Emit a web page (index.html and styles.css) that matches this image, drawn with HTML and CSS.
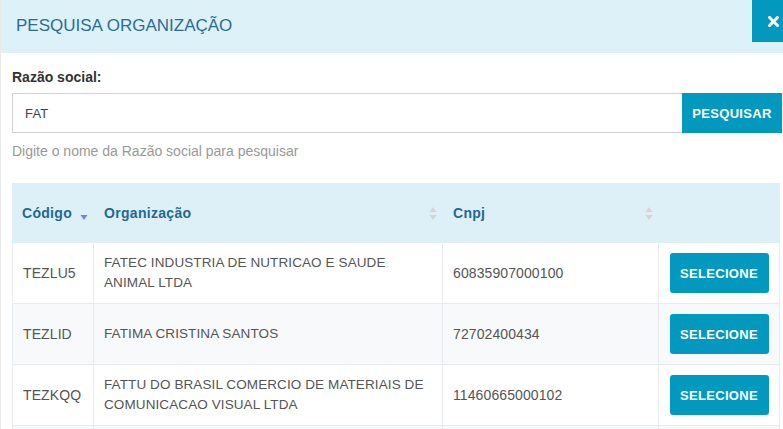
FILE: index.html
```html
<!DOCTYPE html>
<html lang="pt-BR">
<head>
<meta charset="utf-8">
<title>Pesquisa Organização</title>
<link rel="stylesheet" href="styles.css">
</head>
<body>
<div class="modal">
  <div class="modal-header">
    <h1 class="modal-title">PESQUISA ORGANIZAÇÃO</h1>
    <button class="close-btn" aria-label="Fechar">
      <svg width="11" height="11" viewBox="0 0 11 11"><path d="M1.5 1.5 L9.5 9.5 M9.5 1.5 L1.5 9.5" stroke="#fff" stroke-width="3" stroke-linecap="square"/></svg>
    </button>
  </div>
  <div class="modal-body">
    <label class="field-label">Razão social:</label>
    <div class="search-row">
      <div class="search-input">FAT</div>
      <button class="search-btn">PESQUISAR</button>
    </div>
    <p class="help">Digite o nome da Razão social para pesquisar</p>
    <table class="grid">
      <colgroup>
        <col class="c1"><col class="c2"><col class="c3"><col class="c4">
      </colgroup>
      <thead>
        <tr>
          <th><div class="th-in"><span>Código</span>
            <svg class="sort" width="8" height="15" viewBox="0 0 8 15"><path d="M0.5 9 L7.5 9 L4 14 Z" fill="#7b7fe2"/></svg></div></th>
          <th><div class="th-in"><span>Organização</span>
            <svg class="sort" width="8" height="15" viewBox="0 0 8 15"><path d="M4 1 L7.5 6 L0.5 6 Z" fill="#d8d2d2"/><path d="M0.5 9 L7.5 9 L4 14 Z" fill="#d8d2d2"/></svg></div></th>
          <th><div class="th-in"><span>Cnpj</span>
            <svg class="sort" width="8" height="15" viewBox="0 0 8 15"><path d="M4 1 L7.5 6 L0.5 6 Z" fill="#d8d2d2"/><path d="M0.5 9 L7.5 9 L4 14 Z" fill="#d8d2d2"/></svg></div></th>
          <th></th>
        </tr>
      </thead>
      <tbody>
        <tr>
          <td class="code">TEZLU5</td>
          <td class="org">FATEC INDUSTRIA DE NUTRICAO E SAUDE ANIMAL LTDA</td>
          <td class="num">60835907000100</td>
          <td class="act"><button class="sel-btn">SELECIONE</button></td>
        </tr>
        <tr class="alt">
          <td class="code">TEZLID</td>
          <td class="org">FATIMA CRISTINA SANTOS</td>
          <td class="num">72702400434</td>
          <td class="act"><button class="sel-btn">SELECIONE</button></td>
        </tr>
        <tr>
          <td class="code">TEZKQQ</td>
          <td class="org">FATTU DO BRASIL COMERCIO DE MATERIAIS DE COMUNICACAO VISUAL LTDA</td>
          <td class="num">11460665000102</td>
          <td class="act"><button class="sel-btn">SELECIONE</button></td>
        </tr>
        <tr class="alt">
          <td></td><td></td><td></td><td class="act"></td>
        </tr>
      </tbody>
    </table>
  </div>
</div>
</body>
</html>
```
FILE: styles.css
```css
html, body {
  margin: 0;
  padding: 0;
  background: #fff;
  overflow: hidden;
}
body {
  font-family: "Liberation Sans", Arial, sans-serif;
  color: #555;
}
.modal {
  width: 793px;
  border-left: 1px solid #e9e9e9;
  background: #fff;
}
.modal-header {
  height: 53px;
  background: #ddf1f8;
  display: flex;
  justify-content: space-between;
  align-items: flex-start;
}
.modal-title {
  margin: 0;
  padding: 16px 0 0 15px;
  font-size: 17px;
  font-weight: normal;
  line-height: 20px;
  color: #2a6c96;
}
.close-btn {
  width: 42px;
  height: 42px;
  border: 0;
  padding: 0;
  background: #0399bf;
  display: flex;
  align-items: center;
  justify-content: center;
}
.modal-body {
  padding: 14px 12px 0 11px;
}
.field-label {
  display: block;
  font-weight: bold;
  font-size: 14px;
  line-height: 20px;
  color: #333;
  margin-bottom: 6px;
}
.search-row {
  display: flex;
  height: 40px;
}
.search-input {
  flex: 1;
  border: 1px solid #d2d2d2;
  border-right: 0;
  padding: 0 12px;
  font-size: 13px;
  letter-spacing: 0.2px;
  color: #444;
  display: flex;
  align-items: center;
}
.search-btn {
  width: 100px;
  border: 0;
  background: #0399bf;
  color: #fff;
  font-family: "Liberation Sans", Arial, sans-serif;
  font-weight: bold;
  font-size: 13px;
  letter-spacing: 0.3px;
  padding: 0;
}
.help {
  margin: 8px 0 0;
  font-size: 14px;
  line-height: 20px;
  color: #999;
}
.grid {
  margin-top: 22px;
  width: 768px;
  table-layout: fixed;
  border-collapse: separate;
  border-spacing: 0;
  font-size: 13.5px;
  letter-spacing: 0.1px;
}
.c1 { width: 82px; }
.c2 { width: 349px; }
.c3 { width: 216px; }
.c4 { width: 121px; }
.grid th {
  background: #ddf0f7;
  height: 60px;
  padding: 0 6px 0 10px;
  text-align: left;
  font-size: 14px;
  letter-spacing: 0.3px;
  color: #1f6a92;
  font-weight: bold;
}
.th-in {
  display: flex;
  align-items: center;
  justify-content: space-between;
}
.sort {
  display: block;
  flex: none;
}
.grid td {
  height: 60px;
  padding: 0 10px;
  line-height: 20px;
  border-bottom: 1px solid #e8ecee;
  border-right: 1px solid #e8ecee;
  color: #555;
  vertical-align: middle;
}
.grid td:first-child {
  border-left: 1px solid #e8ecee;
}
.grid td.code,
.grid td.num {
  font-size: 14px;
  letter-spacing: 0.1px;
}
.grid tr.alt td {
  background: #f7f9fa;
}
.grid td.act {
  text-align: center;
  padding: 0;
}
.sel-btn {
  width: 99px;
  height: 40px;
  border: 0;
  border-radius: 3px;
  background: #0399bf;
  color: #fff;
  font-family: "Liberation Sans", Arial, sans-serif;
  font-weight: bold;
  font-size: 13px;
  letter-spacing: 0.3px;
  padding: 0;
}
```
